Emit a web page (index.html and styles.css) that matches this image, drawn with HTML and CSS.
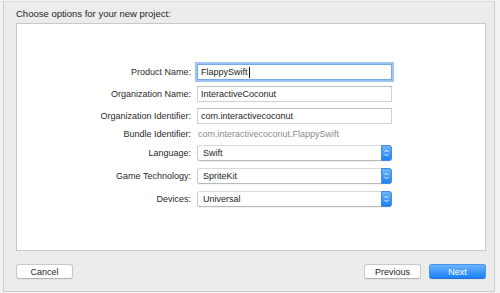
FILE: index.html
```html
<!DOCTYPE html>
<html>
  <head>
    <title>New Project Options</title>
    <meta name="viewport" content="width=device-width, initial-scale=1" />
    <link rel="stylesheet" href="styles.css">
  </head>
  <body>
    <div class="window">
      <div class="title">Choose options for your new project:</div>

      <div class="panel">
        <div class="row">
          <label>Product Name:</label>
          <div class="field focus">FlappySwift<span class="caret"></span></div>
        </div>
        <div class="row">
          <label>Organization Name:</label>
          <div class="field">InteractiveCoconut</div>
        </div>
        <div class="row">
          <label>Organization Identifier:</label>
          <div class="field">com.interactivecoconut</div>
        </div>
        <div class="row info">
          <label>Bundle Identifier:</label>
          <div class="value">com.interactivecoconut.FlappySwift</div>
        </div>
        <div class="row select">
          <label>Language:</label>
          <div class="popup">
            <span class="popup-text">Swift</span>
            <span class="stepper">
              <svg width="11" height="14" viewBox="0 0 11 14"><path d="M3.5 5.5 L5.5 3.5 L7.5 5.5 M3.5 8.5 L5.5 10.5 L7.5 8.5" /></svg>
            </span>
          </div>
        </div>
        <div class="row select">
          <label>Game Technology:</label>
          <div class="popup">
            <span class="popup-text">SpriteKit</span>
            <span class="stepper">
              <svg width="11" height="14" viewBox="0 0 11 14"><path d="M3.5 5.5 L5.5 3.5 L7.5 5.5 M3.5 8.5 L5.5 10.5 L7.5 8.5" /></svg>
            </span>
          </div>
        </div>
        <div class="row select">
          <label>Devices:</label>
          <div class="popup">
            <span class="popup-text">Universal</span>
            <span class="stepper">
              <svg width="11" height="14" viewBox="0 0 11 14"><path d="M3.5 5.5 L5.5 3.5 L7.5 5.5 M3.5 8.5 L5.5 10.5 L7.5 8.5" /></svg>
            </span>
          </div>
        </div>
      </div>

      <div class="actions">
        <button class="btn">Cancel</button>
        <div class="spacer"></div>
        <button class="btn">Previous</button>
        <button class="btn primary">Next</button>
      </div>
    </div>
  </body>
</html>
```

FILE: styles.css
```css
* {
  margin: 0;
  padding: 0;
  box-sizing: border-box;
  font-family: "Liberation Sans", Arial, sans-serif;
}
body {
  background-color: #f2f2f2;
}
.window {
  margin: 1px 0 0 3px;
  width: 492px;
  height: 291px;
  padding: 0 8px 0 12px;
  background-color: #ececec;
  border: 1px solid #cdcdcd;
  border-top-color: #dedede;
}
.title {
  height: 21px;
  line-height: 23px;
  font-size: 9.5px;
  color: #262626;
}
.panel {
  height: 228px;
  padding-top: 40px;
  background-color: #ffffff;
  border: 1px solid #c9c9c9;
}
.row {
  display: grid;
  grid-template-columns: 174px 195px;
  column-gap: 6px;
  align-items: center;
  height: 16px;
  margin-top: 6px;
}
.row:first-child {
  margin-top: 0;
}
.row.info {
  margin-top: 2px;
}
.row.select {
  margin-top: 7px;
}
.row.info + .row.select {
  margin-top: 3px;
}
label {
  text-align: right;
  font-size: 9px;
  line-height: 16px;
  color: #2a2a2a;
}
.field {
  height: 16px;
  padding: 0 3px;
  font-size: 9px;
  line-height: 14px;
  color: #1e1e1e;
  background-color: #ffffff;
  border: 1px solid #d0d0d0;
  border-top-color: #bdbdbd;
  display: flex;
  align-items: center;
}
.field.focus {
  border-color: #7aa9e6;
  box-shadow: 0 0 0 2px #9cc4f6;
}
.caret {
  display: inline-block;
  width: 1px;
  height: 11px;
  margin-left: 1px;
  background-color: #111111;
}
.value {
  padding-left: 1px;
  font-size: 9px;
  color: #8b8b8b;
}
.popup {
  height: 16px;
  display: flex;
  align-items: stretch;
  background-color: #ffffff;
  border: 1px solid #cbcbcb;
  border-top-color: #d8d8d8;
  border-bottom-color: #b9b9b9;
  border-radius: 3px;
  box-shadow: 0 1px 1px rgba(0, 0, 0, 0.06);
}
.popup-text {
  flex: 1;
  padding-left: 5px;
  font-size: 9px;
  line-height: 14px;
  color: #1e1e1e;
}
.stepper {
  width: 11px;
  margin: -1px -1px -1px 0;
  display: flex;
  align-items: center;
  justify-content: center;
  background: linear-gradient(#6db4fb, #1c80f7);
  border: 1px solid #3f8ae6;
  border-radius: 0 3px 3px 0;
}
.stepper svg {
  display: block;
}
.stepper path {
  fill: none;
  stroke: #ffffff;
  stroke-width: 1.2;
  stroke-linecap: round;
  stroke-linejoin: round;
}
.actions {
  display: flex;
  gap: 8px;
  margin-top: 13px;
}
.spacer {
  flex: 1;
}
.btn {
  width: 57px;
  height: 15px;
  font-size: 9px;
  color: #262626;
  background-color: #ffffff;
  border: 1px solid #c8c8c8;
  border-bottom-color: #b4b4b4;
  border-radius: 3px;
  box-shadow: 0 1px 0 rgba(0, 0, 0, 0.04);
}
.btn.primary {
  color: #ffffff;
  background: linear-gradient(#6ab4fb, #1a80fa);
  border-color: #4792f0;
  border-bottom-color: #2a72dc;
}
```
